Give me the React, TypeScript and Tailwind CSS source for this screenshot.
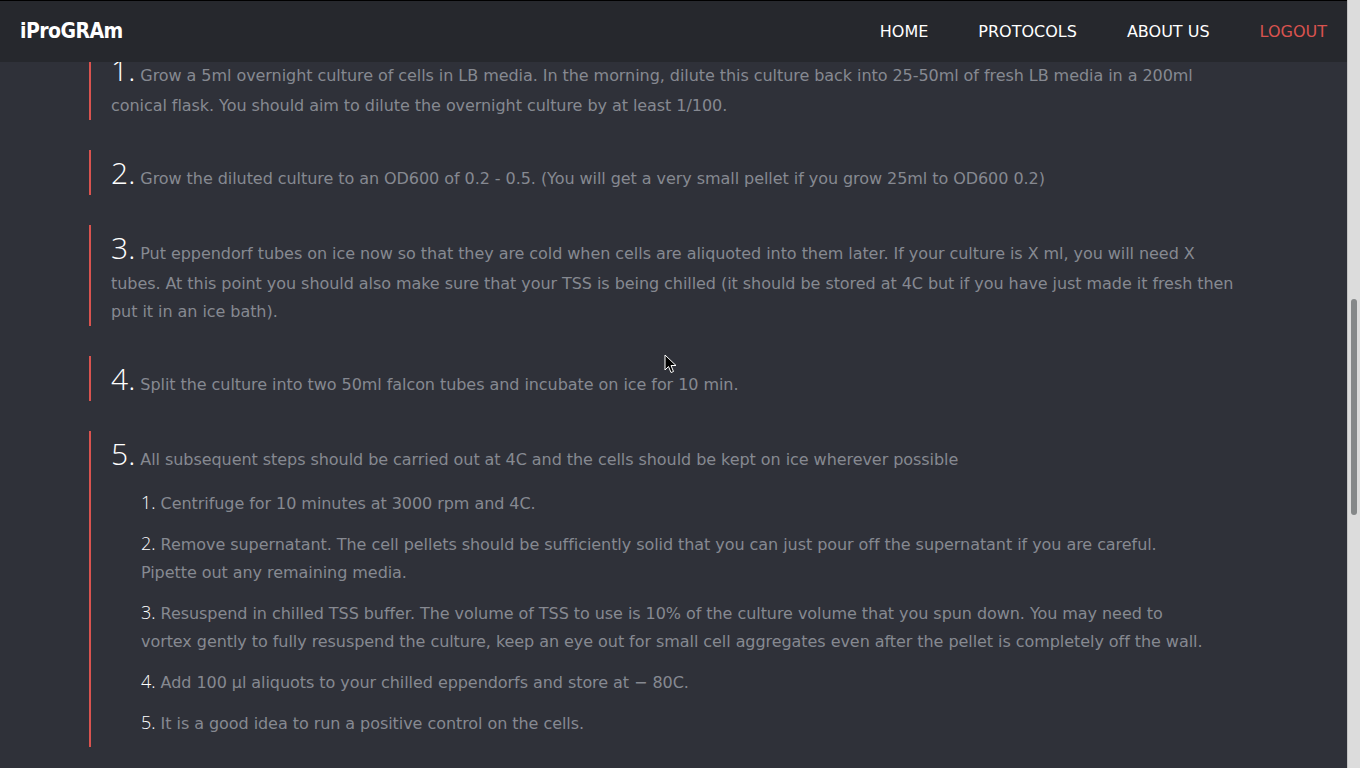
import React from "react";

type Step = { text: string; sub?: string[] };

const steps: Step[] = [
  {
    text: "Grow a 5ml overnight culture of cells in LB media. In the morning, dilute this culture back into 25-50ml of fresh LB media in a 200ml conical flask. You should aim to dilute the overnight culture by at least 1/100.",
  },
  {
    text: "Grow the diluted culture to an OD600 of 0.2 - 0.5. (You will get a very small pellet if you grow 25ml to OD600 0.2)",
  },
  {
    text: "Put eppendorf tubes on ice now so that they are cold when cells are aliquoted into them later. If your culture is X ml, you will need X tubes. At this point you should also make sure that your TSS is being chilled (it should be stored at 4C but if you have just made it fresh then put it in an ice bath).",
  },
  {
    text: "Split the culture into two 50ml falcon tubes and incubate on ice for 10 min.",
  },
  {
    text: "All subsequent steps should be carried out at 4C and the cells should be kept on ice wherever possible",
    sub: [
      "Centrifuge for 10 minutes at 3000 rpm and 4C.",
      "Remove supernatant. The cell pellets should be sufficiently solid that you can just pour off the supernatant if you are careful. Pipette out any remaining media.",
      "Resuspend in chilled TSS buffer. The volume of TSS to use is 10% of the culture volume that you spun down. You may need to vortex gently to fully resuspend the culture, keep an eye out for small cell aggregates even after the pellet is completely off the wall.",
      "Add 100 µl aliquots to your chilled eppendorfs and store at − 80C.",
      "It is a good idea to run a positive control on the cells.",
    ],
  },
];

function StepBlock({ n, step }: { n: number; step: Step }) {
  return (
    <div className="border-l-2 border-[#d9534f] pl-5 mb-[30px]">
      <p className="text-[16px] leading-[28px] tracking-[-0.06px] text-[#868991]">
        <span className="text-[30px] leading-[45px] tracking-normal font-light text-white" style={{ fontFamily: '"Open Sans", sans-serif' }}>
          {n}.
        </span>{" "}
        {step.text}
      </p>
      {step.sub && (
        <div className="flex flex-col gap-[13px] pl-[30px] pr-[40px] mt-[14px] pb-[9px]">
          {step.sub.map((s, i) => (
            <p key={i} className="text-[16px] leading-[28px] tracking-[-0.06px] text-[#868991]">
              <span className="text-[18px] leading-none tracking-normal font-light text-white" style={{ fontFamily: '"Open Sans", sans-serif' }}>
                {i + 1}.
              </span>{" "}
              {s}
            </p>
          ))}
        </div>
      )}
    </div>
  );
}

export default function App() {
  return (
    <div
      className="flex h-screen overflow-hidden bg-[#2f3139]"
      style={{ fontFamily: '"DejaVu Sans", sans-serif' }}
    >
      <div className="relative flex-1 overflow-hidden">
        <nav className="absolute top-0 left-0 right-0 z-10 h-[62px] bg-[#26282d] border-t border-black flex items-center justify-between pl-5 pr-5">
          <div
            className="text-[21px] font-bold text-white tracking-tight"
            style={{ fontFamily: '"DejaVu Sans Condensed", "DejaVu Sans", sans-serif' }}
          >
            iProGRAm
          </div>
          <div className="flex items-center gap-[50px] text-[16px] text-white">
            <a>HOME</a>
            <a>PROTOCOLS</a>
            <a>ABOUT US</a>
            <a className="text-[#d9534f]">LOGOUT</a>
          </div>
        </nav>
        <div className="pt-[47px] ml-[89px] w-[1155px]">
          {steps.map((s, i) => (
            <StepBlock key={i} n={i + 1} step={s} />
          ))}
        </div>
        <svg
          className="absolute left-[664px] top-[354px] z-20"
          width="13"
          height="20"
          viewBox="0 0 13 20"
        >
          <path d="M1 1 L1 16 L4.5 12.5 L7 18.5 L9.5 17.5 L7 11.5 L12 11.5 Z" fill="#000" stroke="#fff" strokeWidth="1" />
        </svg>
      </div>
      <div className="w-[13px] bg-[#dcdcdc] border-l border-[#c4c4c4] flex justify-center">
        <div className="w-[6px] h-[216px] mt-[299px] rounded-full bg-[#858889]" />
      </div>
    </div>
  );
}
